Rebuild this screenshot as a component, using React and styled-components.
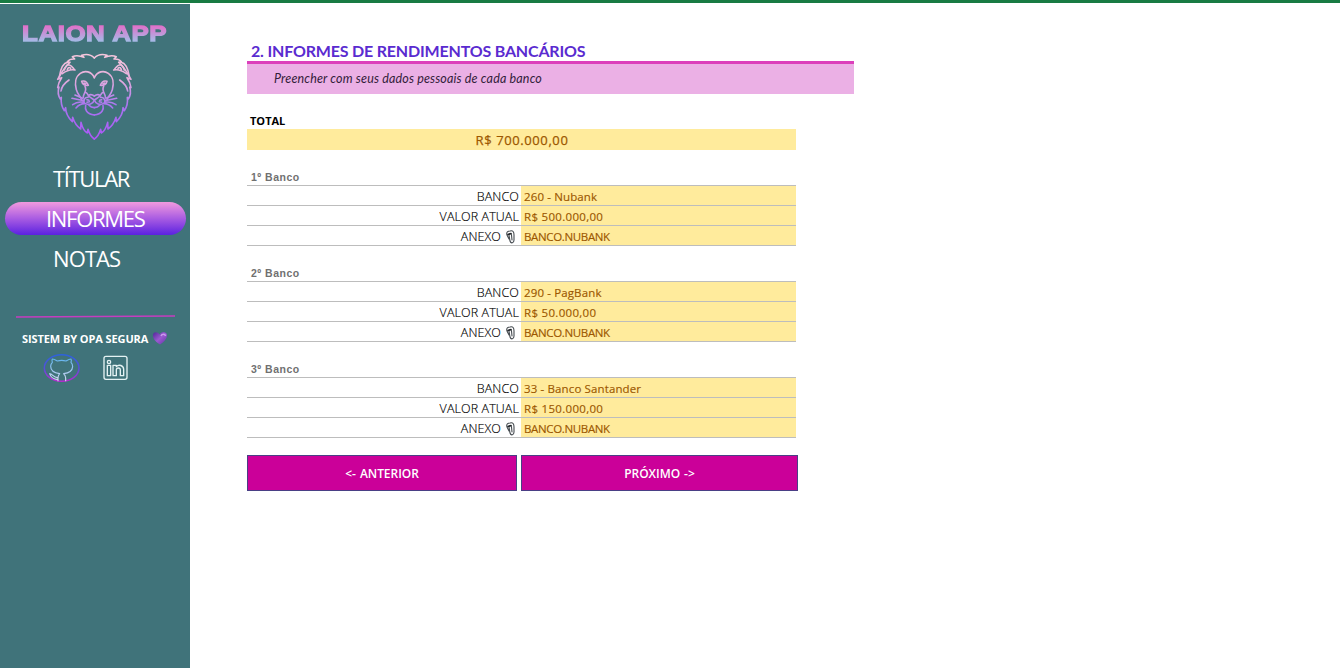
import React from "react";
import styled, { createGlobalStyle } from "styled-components";

const Global = createGlobalStyle`
  * { box-sizing: border-box; }
  body { margin: 0; background: #fff; overflow: hidden; }
`;
const Page = styled.div`
  height: 668px;
  display: flex;
  flex-direction: column;
  font-family: "Open Sans", "Noto Sans", sans-serif;
`;
const TopBar = styled.div`
  height: 3px;
  flex: none;
  background: #187b43;
`;
const Body = styled.div`
  flex: 1;
  display: flex;
  padding-top: 1px;
`;
const Sidebar = styled.aside`
  width: 190px;
  background: #40737a;
  display: flex;
  flex-direction: column;
`;
const Brand = styled.h1`
  margin: 17px 0 0 22px;
  height: 25px;
  width: 140px;
  font: 700 22.5px/25px "Liberation Sans", Arial, sans-serif;
  letter-spacing: 0.5px;
  white-space: nowrap;
  color: transparent;
  background: linear-gradient(#e56bc8 15%, #a6b9e6 80%);
  background-clip: text;
  -webkit-text-stroke: 1.3px transparent;
  transform: scaleX(1.15);
  transform-origin: left;
`;
const LionArt = styled.svg`
  width: 100px;
  height: 100px;
  margin: -1px 0 0 45px;
  fill: none;
  stroke-linecap: round;
  stroke-linejoin: round;
`;
const Nav = styled.nav`
  display: flex;
  flex-direction: column;
  gap: 7px;
  margin: 17px 4px 0 5px;
`;
const NavItem = styled.a`
  height: 33px;
  border-radius: 17px;
  padding-left: ${(p) => p.$indent}px;
  font-size: 22px;
  line-height: 32px;
  letter-spacing: ${(p) => p.$track}px;
  color: #fff;
  white-space: nowrap;
  background: ${(p) => (p.$active ? "linear-gradient(#f19ade, #a95ce2 50%, #5b22e0)" : "none")};
`;
const DividerLine = styled.svg`
  display: block;
  margin: 40px 0 0 15px;
  width: 161px;
  height: 3px;
  stroke: #c63cc0;
  stroke-width: 1.3;
`;
const Credit = styled.div`
  display: flex;
  align-items: center;
  height: 18px;
  margin: 11px 0 0 22px;
  gap: 4px;
  font-size: 11px;
  font-weight: 700;
  letter-spacing: -0.09px;
  color: #fff;
  white-space: nowrap;
`;
const Social = styled.div`
  display: flex;
  align-items: center;
  margin: 6px 0 0 43px;
  gap: 23px;
`;
const Main = styled.main`
  padding: 36px 0 0 57px;
  width: 664px;
`;
const Title = styled.h2`
  margin: 0;
  height: 21px;
  padding-left: 4px;
  font: 700 16px/22px Lato, sans-serif;
  letter-spacing: -0.18px;
  color: #5a2bd0;
  white-space: nowrap;
`;
const Hint = styled.div`
  height: 33px;
  border-top: 3px solid #dc3fbb;
  background: #ebb0e5;
  padding-left: 27px;
  font: italic 12.5px/29px Lato, sans-serif;
  letter-spacing: 0.16px;
  color: #33203a;
`;
const Sheet = styled.section`
  width: 549px;
`;
const TotalLabel = styled.div`
  margin-top: 18px;
  height: 17px;
  padding-left: 3px;
  font: 700 11px/17px "Open Sans", sans-serif;
  color: #000;
`;
const TotalValue = styled.div`
  height: 21px;
  padding-left: 1px;
  text-align: center;
  background: #ffeb9c;
  font: 500 13px/23px "Open Sans", sans-serif;
  letter-spacing: 0.6px;
  color: #9c5700;
  -webkit-text-stroke: 0.25px #9c5700;
`;
const Bank = styled.section`
  padding-top: ${(p) => (p.$first ? 18 : 19)}px;
`;
const BankName = styled.h3`
  margin: 0;
  height: ${(p) => (p.$first ? 18 : 17)}px;
  padding-left: 4px;
  border-bottom: 1px solid #bdbdbd;
  font: 700 10.5px/${(p) => (p.$first ? 18 : 16)}px "Liberation Sans", sans-serif;
  letter-spacing: 0.5px;
  color: #707070;
`;
const Row = styled.div`
  display: flex;
  height: 20px;
  border-bottom: 1px solid #bdbdbd;
`;
const Label = styled.div`
  width: 274px;
  padding-top: 2px;
  padding-right: ${(p) => (p.$icon ? 6 : 2)}px;
  display: flex;
  justify-content: flex-end;
  align-items: center;
  gap: 5px;
  font: 300 12.5px/20px "Open Sans", sans-serif;
  letter-spacing: 0.1px;
  color: #000;
  -webkit-text-stroke: 0.15px #000;
`;
const Value = styled.div`
  flex: 1;
  padding-left: 3px;
  background: #ffeb9c;
  font: 400 11.5px/22px "Open Sans", sans-serif;
  letter-spacing: ${(p) => p.$track || 0}px;
  color: #9c5700;
  -webkit-text-stroke: 0.15px #9c5700;
`;
const Actions = styled.div`
  display: flex;
  gap: 4px;
  width: 551px;
  margin-top: 17px;
`;
const Action = styled.button`
  width: ${(p) => p.$width}px;
  height: 36px;
  padding: 2px 0 0;
  border: 1px solid #4a3f85;
  background: #cb0099;
  color: #fff;
  font: 600 12px/32px "Open Sans", sans-serif;
  letter-spacing: -0.05px;
  word-spacing: 1px;
`;

const LION_HALF = [
  "M148 39 C138 29 122 27 110 31 L117 37 C103 31 91 31 82 35 L89 42 C79 41 72 44 67 50 L75 52 C59 64 50 82 38 103 L50 98 C43 108 39 117 38 128 L42 126 C38 139 40 153 46 162 L49 157 C47 173 51 187 58 197 L62 188 C62 204 69 217 82 230 L83 217 C88 233 95 244 107 252 L108 232 C112 247 117 259 127 264 L129 253 C133 266 139 277 148 282",
  "M43 95 C47 69 56 54 68 52 M52 86 C67 75 76 72 90 75 M58 75 C61 66 67 58 73 60 C80 61 83 68 87 72 M67 74 C68 69 72 65 77 70",
  "M72 105 C59 114 50 125 48 138",
  "M148 98 C139 78 119 76 106 85 C91 95 89 116 94 134 C97 147 106 153 110 164",
  "M110 109 C118 106 126 111 130 121 C121 123 112 119 110 109 M117 114 L122 117",
  "M120 124 C128 139 113 147 115 158 M121 142 C128 144 128 149 132 154",
  "M148 165 C141 160 132 156 131 151 C138 146 144 150 148 153 M148 165 C144 178 131 181 120 175 C112 170 118 156 129 157",
  "M117 167 L81 160 M117 172 C102 169 91 173 83 179 M119 176 C108 176 99 182 93 189 M113 160 L90 150 M126 164 L132 166 M126 172 L133 170",
  "M122 181 C119 193 124 207 148 210 M132 181 C137 187 142 188 148 188",
];

function Lion() {
  return (
    <LionArt viewBox="0 0 300 300">
      <defs>
        <linearGradient id="mane" gradientUnits="userSpaceOnUse" x1="0" y1="25" x2="0" y2="285">
          <stop offset="0" stopColor="#f6c8dc" />
          <stop offset=".3" stopColor="#e5addd" />
          <stop offset=".6" stopColor="#a875ef" />
          <stop offset="1" stopColor="#ab56f7" />
        </linearGradient>
      </defs>
      <g stroke="url(#mane)" strokeWidth="4.8">
        {LION_HALF.map((d) => <path key={d} d={d} />)}
      </g>
      <g stroke="url(#mane)" strokeWidth="4.8" transform="translate(296 0) scale(-1 1)">
        {LION_HALF.map((d) => <path key={d} d={d} />)}
      </g>
    </LionArt>
  );
}

function Heart() {
  return (
    <svg width="16" height="14" viewBox="0 0 16 14">
      <defs>
        <linearGradient id="heart" x1="0" x2="1" y2="1">
          <stop offset="0" stopColor="#4d2596" />
          <stop offset=".5" stopColor="#9a5ad0" />
          <stop offset="1" stopColor="#6531a8" />
        </linearGradient>
      </defs>
      <path d="M8 13.500 C4 11 0 7 1 3.500 C2 0 6 1 7.500 3.500 C9 0 14 0 15 3.500 C15.500 7 12 11 8 13.500Z" fill="url(#heart)" />
      <path d="M9 5 C10 2.500 13 2.500 13.500 5" stroke="#c99aec" strokeWidth="1.500" fill="none" />
    </svg>
  );
}

function Github() {
  return (
    <svg width="37" height="30" viewBox="0 0 111 90" fill="none" strokeLinecap="round" strokeLinejoin="round">
      <defs>
        <linearGradient id="ring" x1="0" x2="0" y1="0" y2="1">
          <stop offset="0" stopColor="#2d62dc" />
          <stop offset=".5" stopColor="#554fda" />
          <stop offset="1" stopColor="#b62ad0" />
        </linearGradient>
        <linearGradient id="cat" x1="0" x2="0" y1="0" y2="1">
          <stop offset="0" stopColor="#62b4ee" />
          <stop offset="1" stopColor="#d8d8f2" />
        </linearGradient>
      </defs>
      <ellipse cx="56" cy="45" rx="52" ry="40" stroke="url(#ring)" strokeWidth="4.500" />
      <path d="M45 83 V74 C45 68 47 65 50 62 C33 60 23 53 23 40 C23 34 25 31 28 28 C27 24 26 20 28 18 C33 18 38 21 43 24 C51 22 61 22 69 24 C74 21 79 18 84 18 C86 21 85 25 84 28 C87 31 89 36 89 41 C88 53 79 60 62 62 C66 65 68 69 68 75 V83 M20 62 C29 62 31 75 45 74 M20 62 C22 70 31 79 45 80" stroke="url(#cat)" strokeWidth="3.500" />
    </svg>
  );
}

function Linkedin() {
  return (
    <svg width="25" height="26" viewBox="0 0 75 78" fill="none" stroke="#e4f2f3" strokeWidth="4" strokeLinejoin="round">
      <rect x="3" y="4" width="69" height="69" rx="6" />
      <circle cx="18" cy="21" r="5" />
      <path d="M13 31 H23 V62 H13 Z M30 31 H40 V35 C47 27 62 31 62 43 V62 H52 V45 C52 37 40 37 40 45 V62 H30 Z" />
    </svg>
  );
}

function Clip() {
  return (
    <svg width="9" height="14" viewBox="0 0 9 14" fill="none" stroke="#454b50" strokeLinecap="round">
      <path d="M3 9 L1 5 C0 2 2 1 4 1 C7 0 8 2 8 5 V10 C8 13 5 14 4 11 L3 5 C3 3 5 3 5.500 5 L6 10" strokeWidth="1.100" />
      <path d="M2 4.500 L5 3.500" stroke="#202428" strokeWidth="1.600" />
    </svg>
  );
}

const banks = [
  { name: "1º Banco", code: "260 - Nubank", amount: "R$ 500.000,00" },
  { name: "2º Banco", code: "290 - PagBank", amount: "R$ 50.000,00" },
  { name: "3º Banco", code: "33 - Banco Santander", amount: "R$ 150.000,00" },
];

export default function App() {
  return (
    <Page>
      <Global />
      <TopBar />
      <Body>
        <Sidebar>
          <Brand>LAION APP</Brand>
          <Lion />
          <Nav>
            <NavItem $indent={48} $track={-1.35}>TÍTULAR</NavItem>
            <NavItem $indent={41} $track={-1.3} $active>INFORMES</NavItem>
            <NavItem $indent={48} $track={-0.9}>NOTAS</NavItem>
          </Nav>
          <DividerLine viewBox="0 0 161 3"><path d="M1 2 L160 1" /></DividerLine>
          <Credit><span>SISTEM BY OPA SEGURA</span><Heart /></Credit>
          <Social><Github /><Linkedin /></Social>
        </Sidebar>
        <Main>
          <Title>2. INFORMES DE RENDIMENTOS BANCÁRIOS</Title>
          <Hint>Preencher com seus dados pessoais de cada banco</Hint>
          <Sheet>
            <TotalLabel>TOTAL</TotalLabel>
            <TotalValue>R$ 700.000,00</TotalValue>
            {banks.map((b, i) => (
              <Bank key={b.name} $first={i === 0}>
                <BankName $first={i === 0}>{b.name}</BankName>
                <Row><Label>BANCO</Label><Value $track={0.13}>{b.code}</Value></Row>
                <Row><Label>VALOR ATUAL</Label><Value $track={0.3}>{b.amount}</Value></Row>
                <Row><Label $icon>ANEXO <Clip /></Label><Value $track={-0.35}>BANCO.NUBANK</Value></Row>
              </Bank>
            ))}
          </Sheet>
          <Actions>
            <Action $width={270}>&lt;- ANTERIOR</Action>
            <Action $width={277}>PRÓXIMO -&gt;</Action>
          </Actions>
        </Main>
      </Body>
    </Page>
  );
}
